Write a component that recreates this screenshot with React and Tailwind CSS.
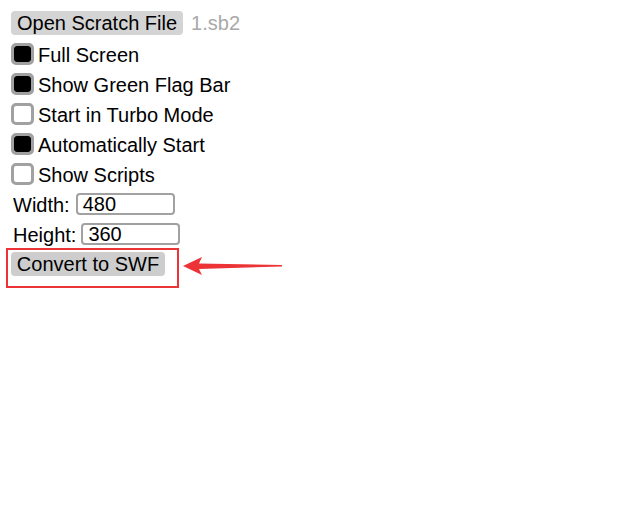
import React from 'react';

// Casilla estilo del navegador (borde gris, relleno negro cuando está marcada)
function Check({ checked, label }) {
  return (
    <div className="flex items-center h-[30px]">
      <div className="w-[23px] h-[22px] rounded-[5px] border-[3px] border-[#a1a1a1] bg-white">
        {checked && <div className="w-full h-full bg-black rounded-[3px]" />}
      </div>
      <span className="ml-[4px] pt-[1px]">{label}</span>
    </div>
  );
}

function Field({ label, value, gap }) {
  return (
    <div className="flex items-center h-[30px] pl-[2px]">
      <span className="pt-[1px]">{label}</span>
      <div
        className={`${gap} w-[99px] h-[22px] rounded-[4px] border-2 border-[#a1a1a1] bg-white flex items-center pl-[5px] leading-none`}
      >
        {value}
      </div>
    </div>
  );
}

export default function App() {
  return (
    <div className="w-[633px] h-[525px] bg-white text-black text-[20px] leading-none font-['Liberation_Sans',Arial,sans-serif] pt-[11px] pl-[11px]">
      <div className="flex items-center h-[24px]">
        <button className="h-[24px] px-[6px] bg-[#d4d4d4] rounded-[4px] leading-none">Open Scratch File</button>
        <span className="ml-[8px] text-[#a9a9a9]">1.sb2</span>
      </div>

      <div className="mt-[4px]">
        <Check checked label="Full Screen" />
        <Check checked label="Show Green Flag Bar" />
        <Check label="Start in Turbo Mode" />
        <Check checked label="Automatically Start" />
        <Check label="Show Scripts" />
        <Field label="Width:" value="480" gap="ml-[6px]" />
        <Field label="Height:" value="360" gap="ml-[5px]" />
      </div>

      <div className="flex items-center -ml-[5px] -mt-[1px]">
        <div className="w-[173px] h-[40px] border-2 border-[#ec3437] pl-[3px] pt-[2px]">
          <button className="h-[24px] w-[154px] bg-[#cdcdcd] rounded-[4px] leading-none">Convert to SWF</button>
        </div>
        <svg width="102" height="26" viewBox="0 0 102 26" className="ml-[3px] -mt-[4px]">
          <path d="M1 13 L20 4 L17 10.5 L100 12 L100 13.5 L17 16 L20 22 Z" fill="#ec3437" />
        </svg>
      </div>
    </div>
  );
}
